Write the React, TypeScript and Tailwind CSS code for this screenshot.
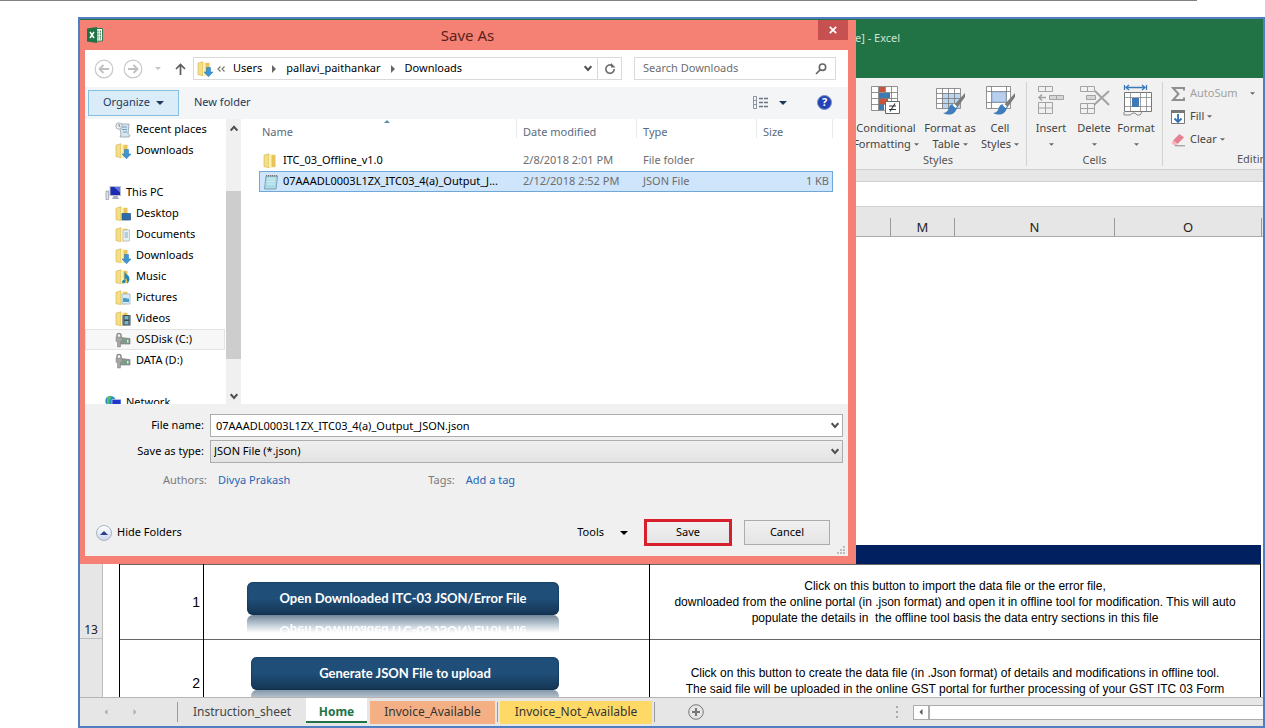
import { useState } from 'react'
import type { ReactNode } from 'react'

type IconKind =
  | 'recent'
  | 'downloads'
  | 'pc'
  | 'desktop'
  | 'documents'
  | 'music'
  | 'pictures'
  | 'videos'
  | 'disk'
  | 'network'

type Place = { label: string; icon: IconKind; root?: boolean; active?: boolean } | null

// null is an empty row between groups
const PLACES: Place[] = [
  { label: 'Recent places', icon: 'recent' },
  { label: 'Downloads', icon: 'downloads' },
  null,
  { label: 'This PC', icon: 'pc', root: true },
  { label: 'Desktop', icon: 'desktop' },
  { label: 'Documents', icon: 'documents' },
  { label: 'Downloads', icon: 'downloads' },
  { label: 'Music', icon: 'music' },
  { label: 'Pictures', icon: 'pictures' },
  { label: 'Videos', icon: 'videos' },
  { label: 'OSDisk (C:)', icon: 'disk', active: true },
  { label: 'DATA (D:)', icon: 'disk' },
  null,
  { label: 'Network', icon: 'network', root: true },
]

function Caret({ className = '' }: { className?: string }) {
  return (
    <svg viewBox="0 0 8 4" className={`shrink-0 ${className}`} fill="currentColor" aria-hidden="true">
      <path d="M0 0h8L4 4z" />
    </svg>
  )
}

function Chevron({ className = '', up = false }: { className?: string; up?: boolean }) {
  return (
    <svg viewBox="0 0 8 7" className={`h-[7px] w-2 shrink-0 ${className}`} fill="none" stroke="#505050" strokeWidth="2" aria-hidden="true">
      <path d={up ? 'M.7 5.5 4 1.8l3.3 3.7' : 'M.7 1.2 4 5l3.3-3.8'} />
    </svg>
  )
}

function FolderBase() {
  return (
    <>
      <path d="M1 2.2 6 .8v13.8l-5-.9z" fill="#f5de86" stroke="#cfae48" strokeWidth=".6" />
      <path d="M6 1.8h6.5v12.4H6z" fill="#e8c35a" />
      <path d="M6 .8 8.500 2v13L6 14.600z" fill="#fdf0b5" />
    </>
  )
}

function PlaceIcon({ kind }: { kind: IconKind }) {
  return (
    <svg viewBox="0 0 16 16" className="h-4 w-4 shrink-0" aria-hidden="true">
      {kind === 'recent' && (
        <>
          <path d="M4 2h10l-1 10 2 1.5-1 1.5H5l1-3z" fill="#d7e5ee" stroke="#8fa0ac" strokeWidth=".8" />
          <path d="M7 5h5M7 7.5h5M8 10h4" stroke="#6f9dbd" strokeWidth="1.2" />
          <circle cx="4" cy="4" r="3.2" fill="#eef1f2" stroke="#9aa3a8" strokeWidth=".8" />
          <path d="M4 2v2l1.5.8" stroke="#555" strokeWidth=".7" fill="none" />
        </>
      )}
      {kind === 'pc' && (
        <>
          <path d="M4.500 1H16v10H4.500z" fill="#b9bfcc" />
          <path d="M5.500 2H15v8H5.500z" fill="#1d2bb0" />
          <path d="M9 2h6v5.500z" fill="#5b74e6" />
          <path d="M8.500 11h4l1.500 3H7z" fill="#a9afba" />
          <path d="M1 6h2.600v8.500H1z" fill="#dfe2e7" stroke="#8f949c" strokeWidth=".7" />
        </>
      )}
      {kind === 'disk' && (
        <>
          <path d="M5 5.5 15 6.500v5.500H4z" fill="#8c9a92" stroke="#6c7771" strokeWidth=".6" />
          <path d="M8 8h6v2.5H8z" fill="#6fa082" />
          <path d="M12 8h1.500v2.500H12z" fill="#dbe9d9" />
          <path d="M2 5V3.400a2 2 0 0 1 4 0V5" fill="none" stroke="#8d8d8d" strokeWidth="1.500" />
          <path d="M1 5h6v4.500H5.500V15h-3V9.500H1z" fill="#a6a6a6" stroke="#7f7f7f" strokeWidth=".5" />
        </>
      )}
      {kind === 'network' && (
        <>
          <circle cx="5.5" cy="6" r="5.2" fill="#2c8fc4" />
          <path d="M2 3c2-2 4-2.500 5-1.500L4 6l1 4-3-1z" fill="#53c06c" />
          <path d="M7 4.500h9v8H7z" fill="#1d37c8" stroke="#b6c2e4" strokeWidth=".8" />
          <path d="M8 13h7v2H8z" fill="#a7b0bd" />
        </>
      )}
      {['downloads', 'desktop', 'documents', 'music', 'pictures', 'videos'].includes(kind) && <FolderBase />}
      {kind === 'downloads' && <path d="M9.500 6.500h4V11H16l-4.500 4.800L7 11h2.500z" fill="#3a96d6" stroke="#2274b4" strokeWidth=".5" />}
      {kind === 'desktop' && <path d="M7 7.500h8.500V14H7z" fill="#2d6cab" stroke="#24517e" strokeWidth=".7" />}
      {kind === 'documents' && (
        <>
          <path d="M8 3h6.500v11H8z" fill="#e8f0f6" stroke="#a5b5c2" strokeWidth=".7" />
          <path d="M9.500 6h3.500M9.500 8h3.500M9.500 10h3.500" stroke="#7ba3c6" strokeWidth=".9" />
        </>
      )}
      {kind === 'music' && <path d="M9.500 2c.5 3.500 5 3.500 5 8 0 2-1 3.500-2.500 4.500.8-3-.3-4.500-1.500-5.500v3.500c0 2-3.500 2.500-3.500.5 0-1.500 1-2 2.500-2z" fill="#2487b8" />}
      {kind === 'pictures' && (
        <>
          <path d="M7 4h8v10H7z" fill="#d9ecf6" stroke="#92abbb" strokeWidth=".7" />
          <path d="M8 8.500c2-2 4 1 6 0V12H8z" fill="#4a9bc4" />
        </>
      )}
      {kind === 'videos' && (
        <>
          <path d="M7.500 4h8v10.500h-8z" fill="#3b4850" />
          <path d="M9.500 5h4v3.500h-4zM9.500 10h4v3.500h-4z" fill="#7ab3cc" />
          <path d="M8.400 4.500v10M14.600 4.500v10" stroke="#cfd6da" strokeWidth=".7" strokeDasharray="1 1" />
        </>
      )}
    </svg>
  )
}

function ExcelLogo() {
  return (
    <svg viewBox="0 0 16 16" className="h-4 w-4" aria-hidden="true">
      <path d="M8 1.500h7.500v12.500H8z" fill="#fff" stroke="#1f7244" strokeWidth=".9" />
      <path d="M11 3.500v9M13.300 3.500v9" stroke="#1f7244" strokeWidth="1" strokeDasharray="2 .6" />
      <path d="M0 1.500 10 0v16L0 14.500z" fill="#1f7244" />
      <path d="m3 5 4 6M7 5l-4 6" stroke="#fff" strokeWidth="1.500" />
    </svg>
  )
}

function NavCircle({ flip = false, label }: { flip?: boolean; label: string }) {
  return (
    <button type="button" aria-label={label} className="h-5 w-5">
      <svg viewBox="0 0 20 20" className={flip ? 'h-5 w-5 rotate-180' : 'h-5 w-5'} fill="none">
        <circle cx="10" cy="10" r="8.800" stroke="#c9c9c9" strokeWidth="1.200" />
        <path d="M15 10H6M9.500 6 5.500 10l4 4" stroke="#bfbfbf" strokeWidth="1.800" />
      </svg>
    </button>
  )
}

function PathArrow() {
  return (
    <svg viewBox="0 0 4 8" className="mx-[10px] h-2 w-1" fill="#666" aria-hidden="true">
      <path d="M0 0v8l4-4z" />
    </svg>
  )
}

function AddressBar() {
  return (
    <div className="flex h-[37px] items-center pl-[9px] pr-3">
      <NavCircle label="Back" />
      <span className="w-[9px]" />
      <NavCircle label="Forward" flip />
      <Caret className="ml-3 h-[3px] w-[6px] text-[#c4c4c4]" />
      <button type="button" aria-label="Up" className="ml-[14px] h-3 w-[11px]">
        <svg viewBox="0 0 11 12" className="h-3 w-[11px]" fill="none" stroke="#5c5c5c" strokeWidth="1.700">
          <path d="M5.500 12V1.500M1 6l4.500-4.500L10 6" />
        </svg>
      </button>
      <nav aria-label="Path" className="ml-[7px] flex h-[23px] flex-1 items-center border border-[#dadada] pl-[3px]">
        <PlaceIcon kind="downloads" />
        <svg viewBox="0 0 8 6" className="ml-1 h-[6px] w-2" fill="none" stroke="#777" strokeWidth="1.200" aria-hidden="true">
          <path d="M3.500.5 1 3l2.500 2.500M7.500.5 5 3l2.500 2.500" />
        </svg>
        <a href="#users" className="ml-2">Users</a>
        <PathArrow />
        <a href="#pallavi">pallavi_paithankar</a>
        <PathArrow />
        <a href="#downloads">Downloads</a>
        <Chevron className="ml-auto mr-[5px]" />
        <button type="button" aria-label="Refresh" className="flex h-full w-6 items-center justify-center border-l border-[#dadada]">
          <svg viewBox="0 0 12 12" className="h-3 w-3" fill="none" stroke="#6b6b6b" strokeWidth="1.600">
            <path d="M7.500 2.200A4.200 4.200 0 1 0 10.200 6" />
            <path d="M7 0v4.500h4.500z" fill="#6b6b6b" stroke="none" />
          </svg>
        </button>
      </nav>
      <label className="ml-3 flex h-[23px] w-[202px] items-center border border-[#dadada] px-2">
        <input
          type="search"
          aria-label="Search Downloads"
          placeholder="Search Downloads"
          className="min-w-0 flex-1 outline-none placeholder:text-[#6d6d6d]"
        />
        <svg viewBox="0 0 12 12" className="h-3 w-3" fill="none" stroke="#666" strokeWidth="1.600">
          <circle cx="7.500" cy="4.200" r="3.200" />
          <path d="M5.300 6.600 1 11" />
        </svg>
      </label>
    </div>
  )
}

function CommandBar() {
  return (
    <div className="flex h-[31px] items-center bg-[#f4f5f7] pl-[3px] pr-4 text-[#1e395b]">
      <button type="button" className="flex h-[26px] w-[91px] items-center justify-center gap-[6px] border border-[#84bfe4] bg-[#daecf8]">
        Organize
        <Caret className="h-1 w-2" />
      </button>
      <button type="button" className="ml-[15px]">New folder</button>
      <button type="button" aria-label="Change your view" className="ml-auto flex items-center">
        <svg viewBox="0 0 16 13" className="h-[13px] w-4" fill="none">
          <path d="M.5.5h3v12h-3zM.5 4.500h3M.5 8.500h3" stroke="#8a93a0" />
          <path d="M6 2.500h10M6 6.500h10M6 10.500h10" stroke="#6c7583" strokeWidth="1.400" strokeDasharray="4 1" />
        </svg>
        <Caret className="ml-[10px] h-1 w-2" />
      </button>
      <button type="button" aria-label="Help" className="ml-[30px] flex h-[15px] w-[15px] items-center justify-center rounded-full border border-[#7d8fc9] bg-[#2343b5] font-bold text-white">
        ?
      </button>
    </div>
  )
}

function PlacesTree() {
  return (
    <div className="flex w-[157px] shrink-0 bg-white">
      <ul className="w-[140px] overflow-hidden">
        {PLACES.map((place, i) =>
          place ? (
            <li
              key={i}
              className={
                place.active
                  ? 'flex h-[21px] items-center border border-[#e3e3e3] bg-[#f7f7f7]'
                  : 'flex h-[21px] items-center border border-transparent'
              }
            >
              <a href="#place" className={place.root ? 'flex items-center gap-[5px] pl-[19px]' : 'flex items-center gap-[5px] pl-[29px]'}>
                <PlaceIcon kind={place.icon} />
                {place.label}
              </a>
            </li>
          ) : (
            <li key={i} className="h-[21px]" />
          ),
        )}
      </ul>
      <div className="ml-px flex w-[15px] flex-col items-center bg-[#f0f0f0] pt-[6px] pb-1">
        <Chevron up />
        <div className="mt-[59px] h-[168px] w-full bg-[#cdcdcd]" />
        <Chevron className="mt-auto" />
      </div>
    </div>
  )
}

function HeadCell({ children, last = false }: { children: ReactNode; last?: boolean }) {
  return (
    <th scope="col" className="p-0 text-left align-top font-normal">
      <div className={last ? 'h-[19px] border-x border-[#e6ebf0] pl-[6px] leading-[26px]' : 'h-[19px] border-l border-[#e6ebf0] pl-[6px] leading-[26px]'}>
        {children}
      </div>
    </th>
  )
}

function FileList() {
  return (
    <div className="relative flex-1 bg-white px-[15px]">
      <Caret className="absolute left-[140px] top-px h-[3px] w-[6px] rotate-180 text-[#5f8fae]" />
      <table className="w-full table-fixed border-separate border-spacing-0">
        <colgroup>
          <col />
          <col className="w-[120px]" />
          <col className="w-[120px]" />
          <col className="w-[77px]" />
        </colgroup>
        <thead className="text-[#5a6b80]">
          <tr className="h-[31px]">
            <th scope="col" className="p-0 pl-[3px] text-left align-top font-normal leading-[26px]">Name</th>
            <HeadCell>Date modified</HeadCell>
            <HeadCell>Type</HeadCell>
            <HeadCell last>Size</HeadCell>
          </tr>
        </thead>
        <tbody className="text-[#6d6d6d]">
          <tr className="h-[21px]">
            <td className="p-0 pl-1">
              <span className="flex items-center gap-1 text-black">
                <svg viewBox="0 0 16 16" className="h-4 w-4 shrink-0" aria-hidden="true">
                  <FolderBase />
                </svg>
                ITC_03_Offline_v1.0
              </span>
            </td>
            <td className="p-0 pl-[7px]">2/8/2018 2:01 PM</td>
            <td className="p-0 pl-[7px]">File folder</td>
            <td className="p-0" />
          </tr>
          <tr className="h-[21px] bg-[#cfe5fb]">
            <td className="border-y border-l border-[#6fa8d8] p-0 pl-[3px]">
              <span className="flex items-center gap-1 text-black">
                <svg viewBox="0 0 16 16" className="h-4 w-4 shrink-0" aria-hidden="true">
                  <path d="M3 2h11.500L13 15H1.500z" fill="#a9dbe6" stroke="#6796a5" strokeWidth=".8" />
                  <path d="M4 5h8.500M3.600 7.500h8.500M3.300 10h8.500" stroke="#d9f2f7" strokeWidth=".9" />
                  <path d="M3 1.800h11.500" stroke="#777" strokeWidth="1.600" strokeDasharray="1 1" />
                </svg>
                <span>07AAADL0003L1ZX_ITC03_4(a)_Output_J...</span>
              </span>
            </td>
            <td className="border-y border-[#6fa8d8] p-0 pl-[7px]">2/12/2018 2:52 PM</td>
            <td className="border-y border-[#6fa8d8] p-0 pl-[7px]">JSON File</td>
            <td className="border-y border-r border-[#6fa8d8] p-0 pr-[3px] text-right">1 KB</td>
          </tr>
        </tbody>
      </table>
    </div>
  )
}

function SaveForm() {
  const [name, setName] = useState('07AAADL0003L1ZX_ITC03_4(a)_Output_JSON.json')

  return (
    <form onSubmit={(e) => e.preventDefault()} className="relative bg-[#f0f0f0] pt-[10px] pb-[10px]">
      <div className="grid grid-cols-[119px_1fr] items-center gap-x-[6px] gap-y-[3px] pr-[5px]">
        <label htmlFor="file-name" className="text-right">File name:</label>
        <div className="relative">
          <input
            id="file-name"
            value={name}
            onChange={(e) => setName(e.target.value)}
            className="block h-[23px] w-full border border-[#adadad] bg-white pl-[5px] pr-6 outline-none"
          />
          <Chevron className="absolute right-1 top-2" />
        </div>
        <label htmlFor="save-type" className="text-right">Save as type:</label>
        <div className="relative">
          <select
            id="save-type"
            className="block h-[23px] w-full appearance-none border border-[#adadad] bg-linear-to-b from-[#efefef] to-[#e3e3e3] pl-[3px] pr-6 outline-none"
          >
            <option>JSON File (*.json)</option>
          </select>
          <Chevron className="absolute right-1 top-2" />
        </div>
      </div>
      <div className="mt-2 flex h-[18px] items-center">
        <span className="w-[122px] text-right text-[#7a7a7a]">Authors:</span>
        <a href="#authors" className="ml-[11px] text-[#1f66b5]">Divya Prakash</a>
        <span className="ml-[138px] text-[#7a7a7a]">Tags:</span>
        <a href="#tags" className="ml-[11px] text-[#1f66b5]">Add a tag</a>
      </div>
      <div className="mt-[30px] flex h-[27px] items-center pl-[11px] pr-[18px]">
        <button type="button" className="flex items-center gap-[5px]">
          <span className="flex h-4 w-4 items-center justify-center rounded-full border border-[#a9b2c4] bg-linear-to-b from-white to-[#cdd6ea]">
            <Caret className="h-1 w-2 rotate-180 text-[#24408c]" />
          </span>
          Hide Folders
        </button>
        <button type="button" className="ml-auto flex items-center gap-4">
          Tools
          <Caret className="h-1 w-2" />
        </button>
        <button type="submit" className="ml-4 h-[27px] w-[88px] border-3 border-[#d7202b] bg-linear-to-b from-[#f0f0f0] to-[#e5e5e5]">
          Save
        </button>
        <button type="button" className="ml-3 h-[25px] w-[86px] border border-[#acacac] bg-linear-to-b from-[#f0f0f0] to-[#e5e5e5]">
          Cancel
        </button>
      </div>
      <svg viewBox="0 0 9 9" className="absolute bottom-px right-[2px] h-[9px] w-[9px]" fill="#bcbcbc" aria-hidden="true">
        <path d="M6 0h2v2H6zM6 3h2v2H6zM3 3h2v2H3zM6 6h2v2H6zM3 6h2v2H3zM0 6h2v2H0z" />
      </svg>
    </form>
  )
}

function SaveAsDialog() {
  return (
    <section
      role="dialog"
      aria-label="Save As"
      className="absolute left-0 top-px w-[776px] border-b-8 border-l-5 border-r-8 border-[#f58174] bg-white text-[11px]"
    >
      <header className="-mr-2 flex h-[30px] items-center bg-[#f58174] pl-[2px] pr-2">
        <ExcelLogo />
        <h1 className="flex-1 pl-[14px] text-center text-[15px] text-[#5a1f1b]">Save As</h1>
        <button type="button" aria-label="Close" className="flex h-5 w-[30px] items-center justify-center self-start bg-[#c75050]">
          <svg viewBox="0 0 8 8" className="h-2 w-2" stroke="#fff" strokeWidth="1.800">
            <path d="m.8.8 6.400 6.400M7.200.8.800 7.200" />
          </svg>
        </button>
      </header>
      <AddressBar />
      <CommandBar />
      <div className="flex h-[286px] gap-[2px] border-t border-[#f4f5f7]">
        <PlacesTree />
        <FileList />
      </div>
      <SaveForm />
    </section>
  )
}

function Brush() {
  return (
    <>
      <path d="M31 9 20 21l3 3 8-11z" fill="#7b7b7b" />
      <path d="M20 20c-4 0-5 3-6 6-1 2-3 3-5 3 6 3 12 2 14-5z" fill="#3f7dbd" />
      <path d="m18.500 21 3 3 1.500-1.500-3-3z" fill="#fff" />
    </>
  )
}

function ConditionalIcon() {
  return (
    <svg viewBox="0 0 32 32" className="h-8 w-8" aria-hidden="true">
      <path d="M1.500 2.500h26v24h-26z" fill="#fff" />
      <path d="M9 3h6v5H9zM9 14h9v6H9z" fill="#c8543c" />
      <path d="M9 9h11v5H9zM9 20h5v6H9z" fill="#3d79b5" />
      <path d="M1.500 2.500h26v24h-26zM8.500 2.500v24M15.500 2.500v24M21.500 2.500v24M1.500 8.500h26M1.500 14.500h26M1.500 20.500h26" fill="none" stroke="#777" strokeWidth=".8" />
      <path d="M15.500 17.500h14v12h-14z" fill="#fff" stroke="#666" />
      <path d="M19 22h7M19 25.500h7M25 19.500l-5 8" stroke="#333" strokeWidth="1.100" />
    </svg>
  )
}

function FormatTableIcon() {
  return (
    <svg viewBox="0 0 32 32" className="h-8 w-8" aria-hidden="true">
      <path d="M2.500 4.500h24v20h-24z" fill="#fff" />
      <path d="M8 9h18v15H8z" fill="#bcd5ee" />
      <path d="M2.500 4.500h24v20h-24zM8.500 4.500v20M14.500 4.500v20M20.500 4.500v20M2.500 9.500h24M2.500 14.500h24M2.500 19.500h24" fill="none" stroke="#777" strokeWidth=".8" />
      <Brush />
    </svg>
  )
}

function CellStylesIcon() {
  return (
    <svg viewBox="0 0 32 32" className="h-8 w-8" aria-hidden="true">
      <path d="M2.500 2.500h24v22h-24z" fill="#fff" />
      <path d="M2.500 2.500h24v22h-24zM7.500 2.500v22M22.500 2.500v22M2.500 7.500h24M2.500 18.500h24" fill="none" stroke="#777" strokeWidth=".8" />
      <path d="M8 8h14v10H8z" fill="#b9cff0" stroke="#7fa1cf" strokeWidth=".6" />
      <Brush />
    </svg>
  )
}

function InsertIcon() {
  return (
    <svg viewBox="0 0 32 32" className="h-8 w-8" fill="none" stroke="#a3a3a3" aria-hidden="true">
      <path d="M3.500 2.500h14v5h-14zM10.500 2.500v5M3.500 18.500h14v11h-14zM10.500 18.500v11M3.500 24h14" />
      <path d="M14.500 11.500h14v4h-14z" fill="#d6d6d6" />
      <path d="M21.500 11.500v4" />
      <path d="M11 13.500H4M7 10.500l-3 3 3 3" strokeWidth="1.600" />
    </svg>
  )
}

function DeleteIcon() {
  return (
    <svg viewBox="0 0 32 32" className="h-8 w-8" fill="none" stroke="#a3a3a3" aria-hidden="true">
      <path d="M2.500 2.500h14v5h-14zM9.500 2.500v5M2.500 19.500h14v10h-14zM9.500 19.500v10M2.500 24.500h14" />
      <path d="M8.500 11.500h9v4h-9z" fill="#d6d6d6" />
      <path d="m17 7 14 14M31 7 16 21" strokeWidth="2" />
    </svg>
  )
}

function FormatIcon() {
  return (
    <svg viewBox="0 0 32 32" className="h-8 w-8" fill="none" aria-hidden="true">
      <path d="M4.500 1v5M26.500 1v5M6 3.500h19M9 1 6 3.500 9 6M22 1l3 2.500L22 6" stroke="#3d79b5" strokeWidth="1.300" />
      <path d="M4.500 8.500h27v19h-27z" fill="#fff" stroke="#777" />
      <path d="M10.500 8.500v19M20.500 8.500v19M26.500 8.500v19M4.500 13.500h27M4.500 22.500h27" stroke="#888" strokeWidth=".8" />
      <path d="M12 14h7v9h-7z" fill="#3d79b5" />
      <path d="M4 28v3h6l3-2h2l2 2h3l2-3" stroke="#888" fill="#f1f1f1" />
    </svg>
  )
}

function RibbonButton({ icon, top, bottom, className }: { icon: ReactNode; top: string; bottom?: string; className: string }) {
  return (
    <button type="button" className={`flex shrink-0 flex-col items-center pt-[2px] ${className}`}>
      {icon}
      <span className="mt-1 leading-4 whitespace-nowrap">{top}</span>
      <span className="flex h-4 items-center gap-[3px]">
        {bottom}
        <Caret className="h-[3px] w-[5px] text-[#666]" />
      </span>
    </button>
  )
}

function RibbonGroup({ title, children, className }: { title: string; children: ReactNode; className: string }) {
  return (
    <div className={`flex shrink-0 flex-col border-r border-[#d2d2d2] ${className}`}>
      <div className="flex flex-1">{children}</div>
      <div className="text-center leading-4 text-[#555]">{title}</div>
    </div>
  )
}

function Ribbon() {
  return (
    <div className="flex h-[92px] overflow-hidden border-b border-[#d0d0d0] bg-[#f1f1f1] pl-[770px] text-[11px] text-[#444]">
      <div className="flex pt-1 pb-[3px]">
        <RibbonGroup title="Styles" className="w-[177px]">
          <RibbonButton className="w-[72px]" icon={<ConditionalIcon />} top="Conditional" bottom="Formatting" />
          <RibbonButton className="w-14" icon={<FormatTableIcon />} top="Format as" bottom="Table" />
          <RibbonButton className="w-11" icon={<CellStylesIcon />} top="Cell" bottom="Styles" />
        </RibbonGroup>
        <RibbonGroup title="Cells" className="w-[136px]">
          <RibbonButton className="w-12" icon={<InsertIcon />} top="Insert" />
          <RibbonButton className="w-[38px]" icon={<DeleteIcon />} top="Delete" />
          <RibbonButton className="w-[46px]" icon={<FormatIcon />} top="Format" />
        </RibbonGroup>
        <div className="flex w-[176px] shrink-0 flex-col pl-2">
          <div className="flex flex-1 flex-col">
            <button type="button" className="flex h-[23px] items-center text-[#a0a0a0]">
              <svg viewBox="0 0 14 14" className="h-[14px] w-[14px]" fill="none" stroke="#8f8f8f" strokeWidth="2">
                <path d="M13 3.500V1H2l5.500 6L2 13h11v-2.500" />
              </svg>
              <span className="ml-[5px]">AutoSum</span>
              <Caret className="ml-3 h-[3px] w-[5px] text-[#666]" />
            </button>
            <button type="button" className="flex h-[23px] items-center">
              <svg viewBox="0 0 14 14" className="h-[14px] w-[14px]" fill="none">
                <path d="M.5.5h13v13H.5z" fill="#fff" stroke="#777" />
                <path d="M0 0h14v3H0z" fill="#777" />
                <path d="M7 4v7.500M3.500 8.500 7 12l3.500-3.500" stroke="#2f6fb0" strokeWidth="1.800" />
              </svg>
              <span className="ml-[5px]">Fill</span>
              <Caret className="ml-[3px] h-[3px] w-[5px] text-[#666]" />
            </button>
            <button type="button" className="flex h-[23px] items-center">
              <svg viewBox="0 0 14 14" className="h-[14px] w-[14px]">
                <path d="M8.500 1 13 4.500 6.500 11 2 7.500z" fill="#e8808f" />
                <path d="M2 7.500 6.500 11l-1 1.500H3L.5 10z" fill="#f3b9c1" />
                <path d="M4 12.800h10" stroke="#888" />
              </svg>
              <span className="ml-[5px]">Clear</span>
              <Caret className="ml-[3px] h-[3px] w-[5px] text-[#666]" />
            </button>
          </div>
          <div className="text-center leading-4 text-[#555]">Editing</div>
        </div>
      </div>
    </div>
  )
}

const MACRO_FACE =
  'flex h-[33px] w-full items-center justify-center rounded-md bg-linear-to-b from-[#1f4e79] via-[#1f4e79] to-[#143552] text-[13px] font-bold text-white'

function MacroButton({ children, className }: { children: string; className: string }) {
  return (
    <button type="button" className={`${MACRO_FACE} shadow-[inset_0_0_2px_#0b2743] ${className}`}>
      {children}
    </button>
  )
}

function Sheet() {
  return (
    <div className="flex flex-1 overflow-hidden bg-white">
      <div className="flex w-[23px] shrink-0 flex-col justify-end border-r border-[#bdbdbd] bg-[#e6e6e6] text-center text-xs text-[#222]">
        <div className="border-b border-[#bdbdbd] leading-4">13</div>
        <div className="h-[58px]" />
      </div>
      <div className="flex min-w-0 flex-1 flex-col justify-end pl-4 pr-[2px]">
        <div className="h-[19px] bg-[#002060]" />
        <table className="w-full table-fixed border-collapse font-['Liberation_Sans',Arial,sans-serif] text-xs leading-4 text-black">
          <colgroup>
            <col className="w-[84px]" />
            <col className="w-[446px]" />
            <col />
          </colgroup>
          <tbody>
            <tr className="h-[75px] border-y border-y-[#666]">
              <td className="border-x border-black p-0 pr-[3px] text-right text-sm">1</td>
              <td className="border-r border-black p-0 align-top font-['Lato','Carlito',sans-serif]">
                <div className="ml-[43px] mt-[17px] w-[312px]">
                  <MacroButton className="">Open Downloaded ITC-03 JSON/Error File</MacroButton>
                  {/* mirrored reflection under the button */}
                  <div className="h-[18px] overflow-hidden opacity-60 mask-b-from-0% mask-b-to-100%" aria-hidden="true">
                    <div className={`${MACRO_FACE} -scale-y-100`}>Open Downloaded ITC-03 JSON/Error File</div>
                  </div>
                </div>
              </td>
              <td className="border-r border-black p-0 text-center">
                Click on this button to import the data file or the error file,
                <br />
                downloaded from the online portal (in .json format) and open it in offline tool for modification. This will auto
                <br />
                populate the details in &nbsp;the offline tool basis the data entry sections in this file
              </td>
            </tr>
            <tr className="h-[58px]">
              <td className="border-x border-black p-0 pr-[3px] pb-1 text-right align-bottom text-sm">2</td>
              <td className="border-r border-black p-0 align-top font-['Lato','Carlito',sans-serif]">
                <div className="ml-[47px] mt-[17px] w-[308px]">
                  <MacroButton className="">Generate JSON File to upload</MacroButton>
                  <div className="h-[7px] rounded-t-md bg-linear-to-b from-[#8496a8] to-[#b4c0cb]" />
                </div>
              </td>
              <td className="border-r border-black p-0 text-center align-bottom">
                Click on this button to create the data file (in .Json format) of details and modifications in offline tool.
                <br />
                The said file will be uploaded in the online GST portal for further processing of your GST ITC 03 Form
              </td>
            </tr>
          </tbody>
        </table>
      </div>
    </div>
  )
}

function TabBar() {
  return (
    <footer className="flex h-[29px] shrink-0 items-center border-t border-[#b5b5b5] bg-[#e6e6e6] text-xs text-[#444]">
      <button type="button" aria-label="Previous sheet" className="ml-[23px] text-[#b0b0b0]">
        <Caret className="h-1 w-[6px] rotate-90" />
      </button>
      <button type="button" aria-label="Next sheet" className="ml-[23px] text-[#b0b0b0]">
        <Caret className="h-1 w-[6px] -rotate-90" />
      </button>
      <button type="button" className="ml-[39px] h-5 w-[129px] border-l border-[#9a9a9a]">Instruction_sheet</button>
      <button type="button" className="h-[25px] w-[61px] self-start border-b-2 border-[#217346] bg-white pt-1 font-bold text-[#217346]">Home</button>
      <button type="button" className="ml-[3px] h-[23px] w-[125px] bg-[#f4b084] text-[#333]">Invoice_Available</button>
      <span className="ml-[2px] h-5 w-px bg-[#9a9a9a]" />
      <button type="button" className="ml-[2px] h-[23px] w-[152px] bg-[#ffd966] text-[#333]">Invoice_Not_Available</button>
      <span className="ml-[2px] h-5 w-px bg-[#9a9a9a]" />
      <button type="button" aria-label="New sheet" className="ml-[33px]">
        <svg viewBox="0 0 16 16" className="h-4 w-4" fill="none" stroke="#777">
          <circle cx="8" cy="8" r="7.300" />
          <path d="M8 4v8M4 8h8" strokeWidth="2" />
        </svg>
      </button>
      <svg viewBox="0 0 2 12" className="ml-[192px] h-3 w-[2px]" fill="#aaa" aria-hidden="true">
        <path d="M0 0h2v2H0zM0 5h2v2H0zM0 10h2v2H0z" />
      </svg>
      <div className="ml-[15px] flex h-[15px] flex-1 border border-r-0 border-[#ababab] bg-white">
        <button type="button" aria-label="Scroll left" className="flex w-4 items-center justify-center border-r-2 border-[#ababab] text-[#555]">
          <Caret className="h-1 w-[6px] rotate-90" />
        </button>
      </div>
    </footer>
  )
}

export default function App() {
  return (
    <div className="flex min-h-screen flex-col overflow-hidden bg-white font-['Noto_Sans','Segoe_UI',sans-serif] text-black">
      <div className="mr-[68px] h-px bg-[#808080]" />
      <main className="relative ml-[78px] mt-4 flex flex-1 flex-col border-2 border-[#4f7fc0]">
        <div className="flex h-[59px] overflow-hidden bg-[#217346] pt-[11px] pl-[775px] text-[11px] leading-4 text-[#cfe3d7]">
          e] - Excel
        </div>
        <Ribbon />
        <div className="h-3 border-b border-[#d0d0d0] bg-[#e6e6e6]" />
        <div className="h-6 bg-white" />
        <div className="flex h-[31px] items-end border-y border-t-[#d0d0d0] border-b-[#ababab] bg-[#e6e6e6] pl-[775px] text-[13px] text-[#222]">
          <div className="h-[18px] w-[36px] shrink-0 border-r border-[#9a9a9a]" />
          <div className="h-[18px] w-16 shrink-0 border-r border-[#9a9a9a] text-center leading-[18px]">M</div>
          <div className="h-[18px] w-40 shrink-0 border-r border-[#9a9a9a] text-center leading-[18px]">N</div>
          <div className="mr-px h-[18px] flex-1 border-r border-[#9a9a9a] text-center leading-[18px]">O</div>
        </div>
        <Sheet />
        <TabBar />
        <SaveAsDialog />
      </main>
    </div>
  )
}
